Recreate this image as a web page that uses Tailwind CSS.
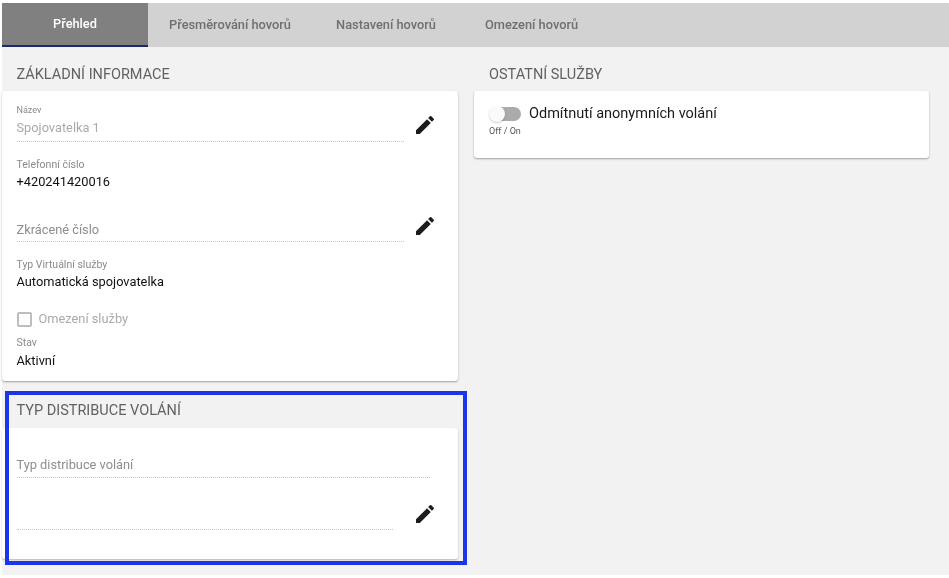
<!DOCTYPE html>
<html lang="cs">
<head>
    <meta charset="UTF-8">
    <meta name="viewport" content="width=device-width, initial-scale=1.0">
    <title>Přehled</title>
    <script src="https://cdn.jsdelivr.net/npm/@tailwindcss/browser@4"></script>
</head>
<body class="bg-white font-['Roboto',sans-serif] overflow-hidden">
    <div class="relative w-[949px] h-[578px] pt-[3px] pl-[2px] blur-[0.4px]">
        <div class="bg-[#f2f2f2] h-[572px]">
            <!-- tabs -->
            <nav class="flex h-[44px] bg-[#d2d2d2] text-[12.8px] font-medium text-[#6f6f6f]">
                <div class="w-[146px] flex items-center justify-center bg-[#808080] text-white border-b-2 border-[#1a2a6c]">Přehled</div>
                <div class="w-[164px] flex items-center justify-center">Přesměrování hovorů</div>
                <div class="w-[148px] flex items-center justify-center">Nastavení hovorů</div>
                <div class="w-[143px] flex items-center justify-center">Omezení hovorů</div>
            </nav>

            <div class="flex">
                <!-- left column -->
                <div class="w-[456px]">
                    <h2 class="h-[44px] pl-[14.5px] pt-[12px] flex items-center text-[14.5px] text-[#616161]">ZÁKLADNÍ INFORMACE</h2>
                    <section class="h-[290px] bg-white rounded-[3px] shadow-[0_1px_2px_rgba(0,0,0,0.35)] pl-[14.5px] pt-[13px] text-[#111]">
                        <div class="flex">
                            <div class="w-[387px] h-[38px] border-b border-dotted border-[#c4c4c4]">
                                <div class="text-[9px] leading-[12px] text-[#8a8a8a]">Název</div>
                                <div class="text-[12.8px] leading-[23px] text-[#aaa]">Spojovatelka 1</div>
                            </div>
                            <svg class="w-[24px] h-[24px] ml-[9px] mt-[9px] fill-[#1c1c1c]" viewBox="0 0 24 24"><path d="M3 17.25V21h3.75L17.81 9.94l-3.75-3.75L3 17.25zM20.71 7.04a1 1 0 0 0 0-1.41l-2.34-2.34a1 1 0 0 0-1.41 0l-1.83 1.83 3.75 3.75 1.83-1.83z"/></svg>
                        </div>
                        <div class="mt-[16px] text-[10.5px] leading-[14px] text-[#8a8a8a]">Telefonní číslo</div>
                        <div class="text-[12.8px] leading-[20px]">+420241420016</div>
                        <div class="flex mt-[23px]">
                            <div class="w-[387px] h-[27px] border-b border-dotted border-[#c4c4c4] text-[12.8px] leading-[30px] text-[#8e8e8e]">Zkrácené číslo</div>
                            <svg class="w-[24px] h-[24px] ml-[9px] -mt-[1px] fill-[#1c1c1c]" viewBox="0 0 24 24"><path d="M3 17.25V21h3.75L17.81 9.94l-3.75-3.75L3 17.25zM20.71 7.04a1 1 0 0 0 0-1.41l-2.34-2.34a1 1 0 0 0-1.41 0l-1.83 1.83 3.75 3.75 1.83-1.83z"/></svg>
                        </div>
                        <div class="mt-[16px] text-[10.5px] leading-[14px] text-[#8a8a8a]">Typ Virtuální služby</div>
                        <div class="text-[12.8px] leading-[19px]">Automatická spojovatelka</div>
                        <div class="flex items-center mt-[17px] h-[22px]">
                            <span class="w-[15px] h-[15px] border-2 border-[#bdbdbd] rounded-[2px]"></span>
                            <span class="ml-[7px] text-[12.8px] text-[#aaa]">Omezení služby</span>
                        </div>
                        <div class="mt-[6px] text-[10.5px] leading-[14px] text-[#8a8a8a]">Stav</div>
                        <div class="text-[12.8px] leading-[22px]">Aktivní</div>
                    </section>

                    <h2 class="mt-[10px] h-[37px] pl-[14.5px] pt-[2px] flex items-center text-[14.5px] text-[#616161]">TYP DISTRIBUCE VOLÁNÍ</h2>
                    <section class="h-[131px] bg-white rounded-[3px] shadow-[0_1px_2px_rgba(0,0,0,0.25)] pl-[14.5px] pt-[23px]">
                        <div class="w-[413px] h-[27px] border-b border-dotted border-[#c4c4c4] text-[12.8px] leading-[28px] text-[#8e8e8e]">Typ distribuce volání</div>
                        <div class="flex">
                            <div class="w-[376px] h-[52px] border-b border-dotted border-[#c4c4c4]"></div>
                            <svg class="w-[24px] h-[24px] ml-[20px] mt-[24px] fill-[#1c1c1c]" viewBox="0 0 24 24"><path d="M3 17.25V21h3.75L17.81 9.94l-3.75-3.75L3 17.25zM20.71 7.04a1 1 0 0 0 0-1.41l-2.34-2.34a1 1 0 0 0-1.41 0l-1.83 1.83 3.75 3.75 1.83-1.83z"/></svg>
                        </div>
                    </section>
                </div>

                <!-- right column -->
                <div class="w-[455px] ml-[16px]">
                    <h2 class="h-[44px] pl-[15px] pt-[12px] flex items-center text-[14.5px] text-[#616161]">OSTATNÍ SLUŽBY</h2>
                    <section class="h-[67px] bg-white rounded-[3px] shadow-[0_1px_2px_rgba(0,0,0,0.35)] pl-[15px] pt-[15px]">
                        <div class="flex items-center h-[16px]">
                            <span class="relative w-[32px] h-[14px]">
                                <span class="absolute left-[2px] right-0 top-0 h-[14px] rounded-full bg-[#ababab]"></span>
                                <span class="absolute left-0 -top-[1px] w-[16px] h-[16px] rounded-full bg-[#fafafa] shadow-[0_1px_2px_rgba(0,0,0,0.2)]"></span>
                            </span>
                            <span class="ml-[8px] text-[14.5px] text-[#1a1a1a]">Odmítnutí anonymních volání</span>
                        </div>
                        <div class="mt-[4px] text-[9px] leading-[11px] text-[#555]">Off / On</div>
                    </section>
                </div>
            </div>
        </div>
        <!-- highlight frame over the screenshot -->
        <div class="absolute left-[5px] top-[391px] w-[462px] h-[174px] border-[4px] border-[#1b35ea]"></div>
    </div>
</body>
</html>
